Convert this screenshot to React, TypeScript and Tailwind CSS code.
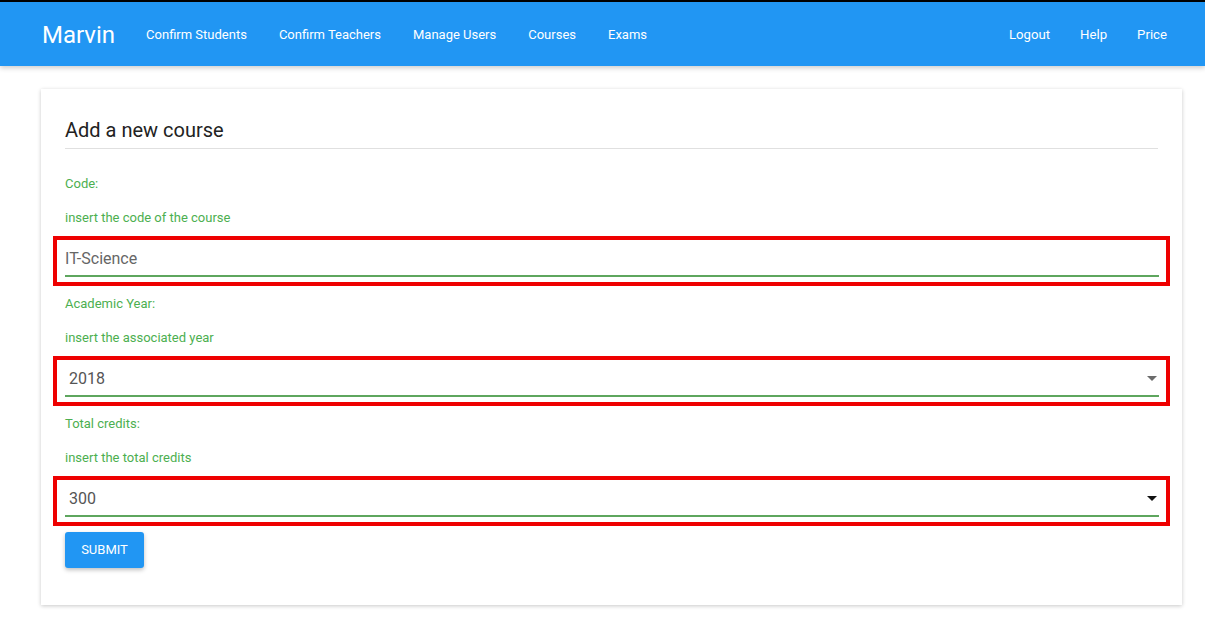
import React from "react";

const font = { fontFamily: "Roboto, 'Liberation Sans', Arial, sans-serif" };

function Caret({ dark }: { dark?: boolean }) {
  return (
    <svg width="10" height="5" viewBox="0 0 10 5" className="shrink-0">
      <polygon points="0,0 10,0 5,5" fill={dark ? "#111" : "#6b6b6b"} />
    </svg>
  );
}

function Group({
  label,
  hint,
  value,
  select,
  dark,
}: {
  label: string;
  hint: string;
  value: string;
  select?: boolean;
  dark?: boolean;
}) {
  return (
    <div className="flex flex-col">
      <div className="mt-[25px] text-[13px] leading-[20px] text-[#4caf50]">{label}</div>
      <div className="mt-[14px] text-[13px] leading-[20px] text-[#4caf50]">{hint}</div>
      <div className="mt-[8px] -mx-[12px] border-4 border-[#ee0000] pl-[8px] pr-[7px] pb-[5px]">
        <div className="h-[37px] pt-[2px] border-b-2 border-[#5ea65e] flex items-center justify-between">
          <span className={`text-[16px] ${select ? "pl-[4px] text-[#555]" : "text-[#666]"}`}>{value}</span>
          {select && (
            <span className="mr-[2px]">
              <Caret dark={dark} />
            </span>
          )}
        </div>
      </div>
    </div>
  );
}

export default function App() {
  const links = ["Confirm Students", "Confirm Teachers", "Manage Users", "Courses", "Exams"];
  const right = ["Logout", "Help", "Price"];
  return (
    <div style={font} className="min-h-[622px] bg-white">
      <div className="h-[2px] bg-black" />
      <nav className="h-[64px] pt-[2px] bg-[#2196f3] shadow-[0_2px_5px_rgba(0,0,0,0.2)] flex items-center justify-between pl-[41px] pr-[23px] relative z-10">
        <div className="flex items-center">
          <span className="text-white text-[24px] ml-[1px] mr-[15px]">Marvin</span>
          {links.map((l) => (
            <span key={l} className="text-white text-[13px] px-[16px]">
              {l}
            </span>
          ))}
        </div>
        <div className="flex items-center">
          {right.map((l) => (
            <span key={l} className="text-white text-[13.2px] px-[15px]">
              {l}
            </span>
          ))}
        </div>
      </nav>
      <div className="pl-[41px] pr-[23px] pt-[23px]">
        <div className="bg-white shadow-[0_1px_4px_rgba(0,0,0,0.22)] px-[24px] pt-[27px] pb-[37px]">
          <div className="text-[20px] leading-[28px] text-[#222] pb-[4px] border-b border-[#e0e0e0]">
            Add a new course
          </div>
          <Group label="Code:" hint="insert the code of the course" value="IT-Science" />
          <div className="-mt-[17px]">
            <Group label="Academic Year:" hint="insert the associated year" value="2018" select />
          </div>
          <div className="-mt-[17px]">
            <Group label="Total credits:" hint="insert the total credits" value="300" select dark />
          </div>
          <button className="mt-[6px] h-[36px] w-[79px] bg-[#2196f3] text-white text-[13px] rounded-[3px] shadow-[0_2px_4px_rgba(0,0,0,0.25)]">
            SUBMIT
          </button>
        </div>
      </div>
    </div>
  );
}
